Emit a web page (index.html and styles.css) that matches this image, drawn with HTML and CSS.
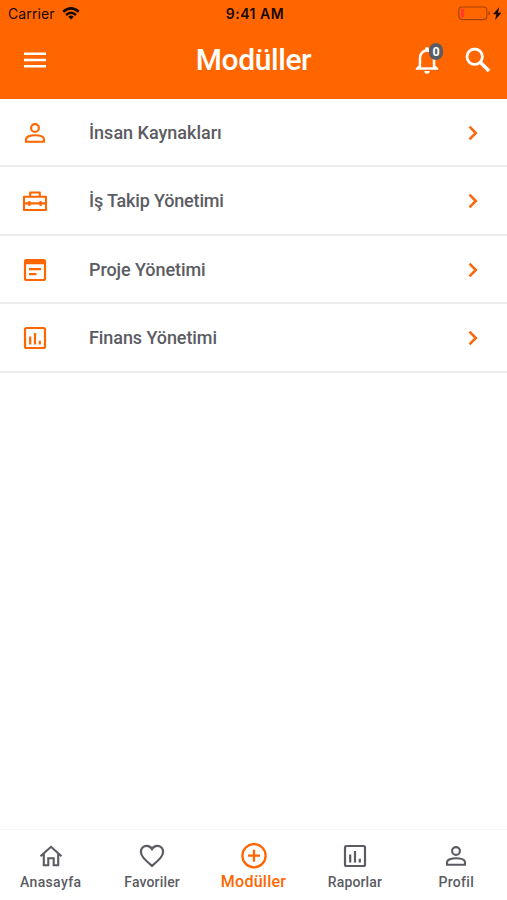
FILE: index.html
```html
<!DOCTYPE html>
<html lang="tr">
<head>
<meta charset="utf-8">
<title>Modüller</title>
<link rel="stylesheet" href="styles.css">
</head>
<body>
<svg class="defs" width="0" height="0">
  <symbol id="person" viewBox="0 0 26 26"><circle cx="13" cy="8" r="3.900" fill="none" stroke="currentColor" stroke-width="2.100"/><path d="M4 21.700V19.500C4 16.600 8.500 15.200 13 15.200S22 16.600 22 19.500V21.700Z" fill="none" stroke="currentColor" stroke-width="2.100"/></symbol>
  <symbol id="chart" viewBox="0 0 26 26"><rect x="3" y="3" width="20" height="20" rx="1.500" fill="none" stroke="currentColor" stroke-width="2.200"/><path d="M8.200 11.500v8M13 8V19.500M17.800 15.700V19.500" fill="none" stroke="currentColor" stroke-width="2.200"/></symbol>
  <symbol id="chevron" viewBox="0 0 12 16"><path d="M2.500 1.700l6.300 6.300-6.300 6.300" fill="none" stroke="currentColor" stroke-width="2.600"/></symbol>
</svg>
<div class="app">
  <header class="header">
    <div class="status">
      <div class="carrier"><span>Carrier</span>
        <svg width="18" height="14" viewBox="0 0 18 14"><g fill="none" stroke="#160900" stroke-width="2.500"><path d="M1.200 4.800Q9-2 16.800 4.800"/><path d="M4 8Q9 3.500 14 8"/></g><path d="M6.200 9.700Q9 7.500 11.800 9.700L9 12.600Z" fill="#160900"/></svg>
      </div>
      <div class="time">9:41 AM</div>
      <div class="battery">
        <svg width="44" height="15" viewBox="0 0 44 15"><rect x=".8" y="1" width="28" height="12.600" rx="3" fill="none" stroke="#a64200" stroke-width="1.100"/><rect x="2.800" y="3" width="3.400" height="8.600" rx="1" fill="#ff3b30"/><path d="M30.400 5q1.600.6 1.600 2.300t-1.600 2.300Z" fill="#a64200"/><path d="M41.200 1.200 35 8.300h3.400l-1.300 5.700L43.500 6.800h-3.500Z" fill="#160900"/></svg>
      </div>
    </div>
    <div class="bar">
      <svg class="menu" width="24" height="18" viewBox="0 0 24 18"><path d="M1 2.800h22M1 9h22M1 15.200h22" fill="none" stroke="#fff" stroke-width="2.600"/></svg>
      <h1 class="title">Modüller</h1>
      <div class="actions">
        <div class="bell">
          <svg width="24" height="28" viewBox="0 0 24 28"><path d="M5 21.500V12.500C5 7.500 8 4.600 12 4.600S19 7.500 19 12.500V21.500" fill="none" stroke="#fff" stroke-width="2.500"/><path d="M.8 23.800V22.300L4.400 19H19.600L23.200 22.300V23.800Z" fill="#fff"/><path d="M6.200 18.500H17.800V21.300H6.200Z" fill="#ff6600"/><circle cx="12" cy="2.900" r="2" fill="#fff"/><path d="M9.200 25H14.800Q14.500 27.800 12 27.800T9.200 25" fill="#fff"/></svg>
          <span class="badge">0</span>
        </div>
        <svg width="26" height="26" viewBox="0 0 26 26"><circle cx="9.700" cy="9.700" r="7.700" fill="none" stroke="#fff" stroke-width="2.800"/><path d="M15.300 15.300 24 24" stroke="#fff" stroke-width="3.600"/></svg>
      </div>
    </div>
  </header>
  <main class="list">
    <div class="row"><svg class="icon"><use href="#person"/></svg><span class="label l1">İnsan Kaynakları</span><svg class="chev"><use href="#chevron"/></svg></div>
    <div class="row"><svg class="icon" viewBox="0 0 26 26"><g fill="none" stroke="currentColor" stroke-width="2.100" stroke-linejoin="round"><path d="M2 8.800H24V22H2ZM8.200 8.500V4.500H17.800V8.500M2 15.400H24"/></g><path d="M6.300 12.900h2.200v5H6.300zM17.500 12.900h2.200v5h-2.200z" fill="currentColor"/></svg><span class="label l2">İş Takip Yönetimi</span><svg class="chev"><use href="#chevron"/></svg></div>
    <div class="row"><svg class="icon" viewBox="0 0 26 26"><rect x="3" y="3" width="20" height="20" rx="1.500" fill="none" stroke="currentColor" stroke-width="2.200"/><path d="M3 5h20" stroke="currentColor" stroke-width="4.500"/><path d="M7 12.200h12M7 17.200h7.500" stroke="currentColor" stroke-width="2.200"/></svg><span class="label l3">Proje Yönetimi</span><svg class="chev"><use href="#chevron"/></svg></div>
    <div class="row"><svg class="icon"><use href="#chart"/></svg><span class="label l4">Finans Yönetimi</span><svg class="chev"><use href="#chevron"/></svg></div>
  </main>
  <nav class="tabs">
    <div class="tab"><svg viewBox="0 0 26 26"><path d="M2.500 13.300 13 3.800l10.500 9.500M5.800 11v11.300H10.300V15.200H15.700V22.300H20.200V11" fill="none" stroke="currentColor" stroke-width="2.100"/></svg><span class="t1">Anasayfa</span></div>
    <div class="tab"><svg viewBox="0 0 26 26"><path d="M13 22.900C6 16.800 1.900 13.300 1.900 8.700A5.800 5.800 0 0 1 7.700 2.800C10 2.800 12 4 13 5.900 14 4 16 2.800 18.300 2.800A5.800 5.800 0 0 1 24.100 8.700C24.100 13.300 20 16.800 13 22.900Z" fill="none" stroke="currentColor" stroke-width="2.200"/></svg><span class="t2">Favoriler</span></div>
    <div class="tab active"><svg viewBox="0 0 26 26"><circle cx="13" cy="12.700" r="11.600" fill="none" stroke="currentColor" stroke-width="2.300"/><path d="M13 6.700v12M7 12.700h12" stroke="currentColor" stroke-width="2.300"/></svg><span class="t3">Modüller</span></div>
    <div class="tab"><svg><use href="#chart"/></svg><span class="t4">Raporlar</span></div>
    <div class="tab"><svg><use href="#person"/></svg><span class="t5">Profil</span></div>
  </nav>
</div>
</body>
</html>
```
FILE: styles.css
```css
* { box-sizing: border-box; }
body { margin: 0; background: #fff; color: #5b5c63; font-family: Roboto, "Liberation Sans", sans-serif; }
svg { display: block; flex: none; }
.defs { position: absolute; }
.app { display: flex; flex-direction: column; height: 900px; }
.header { height: 98.500px; background: #ff6600; }
.status { height: 28px; display: grid; grid-template-columns: 1fr auto 1fr; align-items: center; padding: 0 5px 0 8px; color: #160900; font: 14px/28px Inter, sans-serif; }
.carrier { display: flex; align-items: center; gap: 7px; letter-spacing: .1px; }
.carrier svg { margin-top: -1px; }
.time { font-weight: 600; letter-spacing: .5px; }
.battery { justify-self: end; padding-bottom: 1px; }
.bar { height: 64px; display: grid; grid-template-columns: 1fr auto 1fr; align-items: center; padding: 0 16px 0 23px; }
.title { margin: 0 7px 0 0; color: #fff; font-size: 30px; line-height: 36px; font-weight: 500; letter-spacing: -.4px; }
.actions { justify-self: end; display: flex; align-items: center; gap: 26px; }
.bell { position: relative; }
.badge { position: absolute; left: 14px; top: -3px; width: 14px; height: 17px; border-radius: 7px; background: #5b5c63; color: #fff; font-size: 12.500px; font-weight: 700; line-height: 17px; text-align: center; }
.list { flex: 1; }
.row { height: 68.500px; display: flex; align-items: center; padding: 2px 28px 0 22px; border-bottom: 2px solid #ededef; }
.icon { width: 26px; height: 26px; color: #ff6600; margin-right: 41px; }
.label { flex: 1; font-size: 18px; line-height: 24px; font-weight: 500; white-space: nowrap; }
.l2 { letter-spacing: -.17px; }
.l3, .l4 { letter-spacing: -.08px; }
.chev { width: 12px; height: 16px; color: #f96a10; }
.tabs { height: 71px; display: flex; border-top: 1px solid #f6f6f6; padding-top: 13px; }
.tab { flex: 1; display: flex; flex-direction: column; align-items: center; font-size: 14px; line-height: 18px; font-weight: 500; }
.tab svg { width: 26px; height: 26px; }
.tab span { margin-top: 4px; }
.t1 { letter-spacing: .35px; }
.t2, .t4 { letter-spacing: .15px; }
.t5 { letter-spacing: .3px; }
.active { color: #ff6600; font-size: 16px; }
.tab .t3 { letter-spacing: .25px; }
```
